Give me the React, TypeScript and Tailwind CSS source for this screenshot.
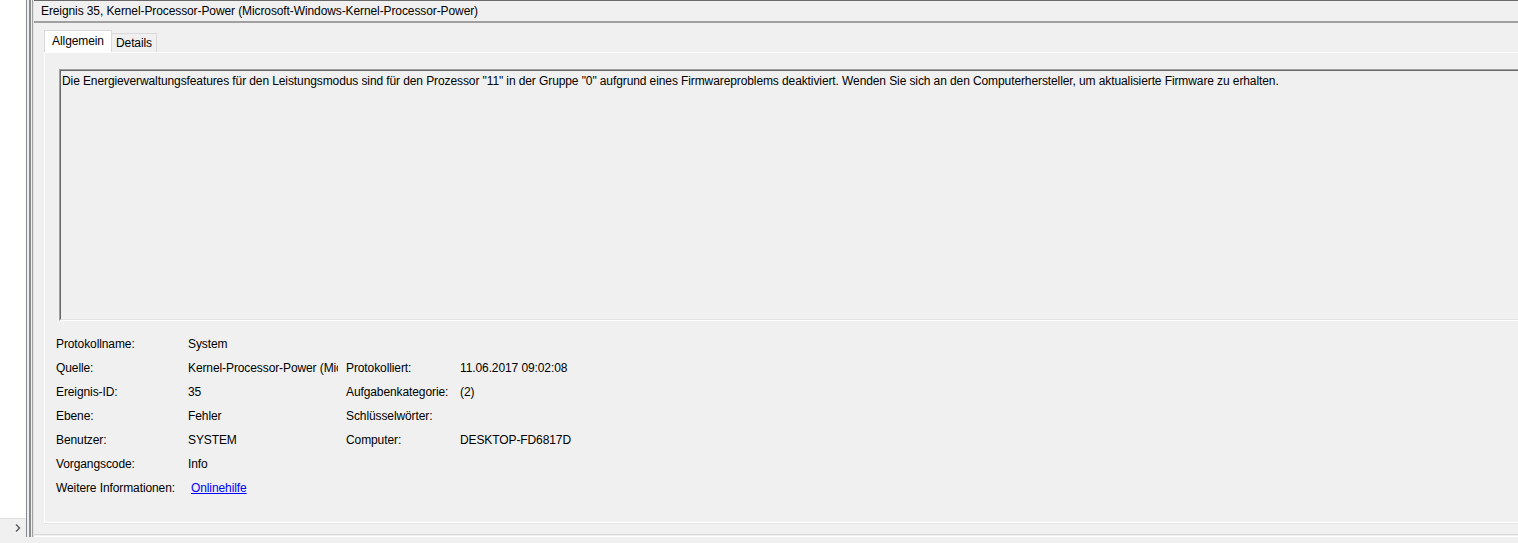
import React from "react";

const F = { fontFamily: '"Liberation Sans", Arial, sans-serif' };

function Row({ a, b, c, d, link }: { a: string; b?: string; c?: string; d?: string; link?: boolean }) {
  return (
    <div className="flex h-[24px] items-center">
      <div className="w-[132px] shrink-0">{a}</div>
      <div className="w-[150px] shrink-0 overflow-hidden whitespace-nowrap">
        {link ? <a className="ml-[3px] text-[#0000ff] underline">{b}</a> : b}
      </div>
      <div className="w-[8px] shrink-0" />
      <div className="w-[114px] shrink-0">{c}</div>
      <div className="whitespace-nowrap">{d}</div>
    </div>
  );
}

export default function App() {
  return (
    <div className="w-[1518px] h-[543px] bg-[#f0f0f0] overflow-hidden text-[12px] tracking-[-0.1px] text-black flex flex-col" style={F}>
      <div className="flex h-[537px]">
        {/* left tree pane */}
        <div className="w-[27px] shrink-0 bg-white border-r border-[#828790] flex flex-col">
          <div className="flex-1" />
          <div className="h-[19px] bg-[#f0f0f0] border-t border-[#e0e0e0] flex items-center justify-end pr-[5px]">
            <svg width="6" height="8" viewBox="0 0 6 8">
              <path d="M1 0.5 L4.5 4 L1 7.5" fill="none" stroke="#606060" strokeWidth="1.5" />
            </svg>
          </div>
        </div>
        {/* splitter */}
        <div className="w-[2px] shrink-0" />
        <div className="w-[2px] shrink-0 bg-[#8a8a8a]" />
        <div className="w-[1px] shrink-0 bg-[#f0f0f0]" />
        <div className="w-[1px] shrink-0 bg-[#a0a0a0]" />
        <div className="w-[1px] shrink-0 bg-[#e3e3e3]" />
        {/* main */}
        <div className="flex-1 flex flex-col border-t border-[#696969]">
          <div className="h-[22px] border-b-2 border-[#a0a0a0] flex items-center pl-[7px] leading-none">
            Ereignis 35, Kernel-Processor-Power (Microsoft-Windows-Kernel-Processor-Power)
          </div>
          <div className="flex-1 flex flex-col pl-[10px] pt-[7px]">
            <div className="flex items-end h-[22px]">
              <div className="h-[22px] w-[68px] bg-white border border-b-0 border-[#d9d9d9] flex items-center justify-center pb-[1px]">
                Allgemein
              </div>
              <div className="h-[19px] w-[45px] border border-l-0 border-b-0 border-[#d9d9d9] flex items-center justify-center">
                Details
              </div>
            </div>
            <div className="h-[471px] border-t border-l border-b border-white flex flex-col">
              <div className="ml-[14px] mt-[16px] h-[252px] border-t border-l border-[#a0a0a0] border-b border-b-white">
                <div className="h-full border-t border-l border-[#696969] border-b border-b-[#e3e3e3] pl-[1px] pt-[1px] whitespace-nowrap">
                  Die Energieverwaltungsfeatures für den Leistungsmodus sind für den Prozessor "11" in der Gruppe "0" aufgrund eines Firmwareproblems deaktiviert. Wenden Sie sich an den Computerhersteller, um aktualisierte Firmware zu erhalten.
                </div>
              </div>
              <div className="pl-[11px] pt-[11px] flex flex-col">
                <Row a="Protokollname:" b="System" />
                <Row a="Quelle:" b="Kernel-Processor-Power (Microsoft-Windows-Kernel-Processor-Power)" c="Protokolliert:" d="11.06.2017 09:02:08" />
                <Row a="Ereignis-ID:" b="35" c="Aufgabenkategorie:" d="(2)" />
                <Row a="Ebene:" b="Fehler" c="Schlüsselwörter:" />
                <Row a="Benutzer:" b="SYSTEM" c="Computer:" d="DESKTOP-FD6817D" />
                <Row a="Vorgangscode:" b="Info" />
                <Row a="Weitere Informationen:" b="Onlinehilfe" link />
              </div>
            </div>
            <div className="flex-1 border-t border-[#e3e3e3]" />
          </div>
          <div className="h-[3px] border-t border-[#d9d9d9] border-b border-b-white" />
        </div>
      </div>
      <div className="flex-1 bg-[#f0f0f0]" />
    </div>
  );
}
